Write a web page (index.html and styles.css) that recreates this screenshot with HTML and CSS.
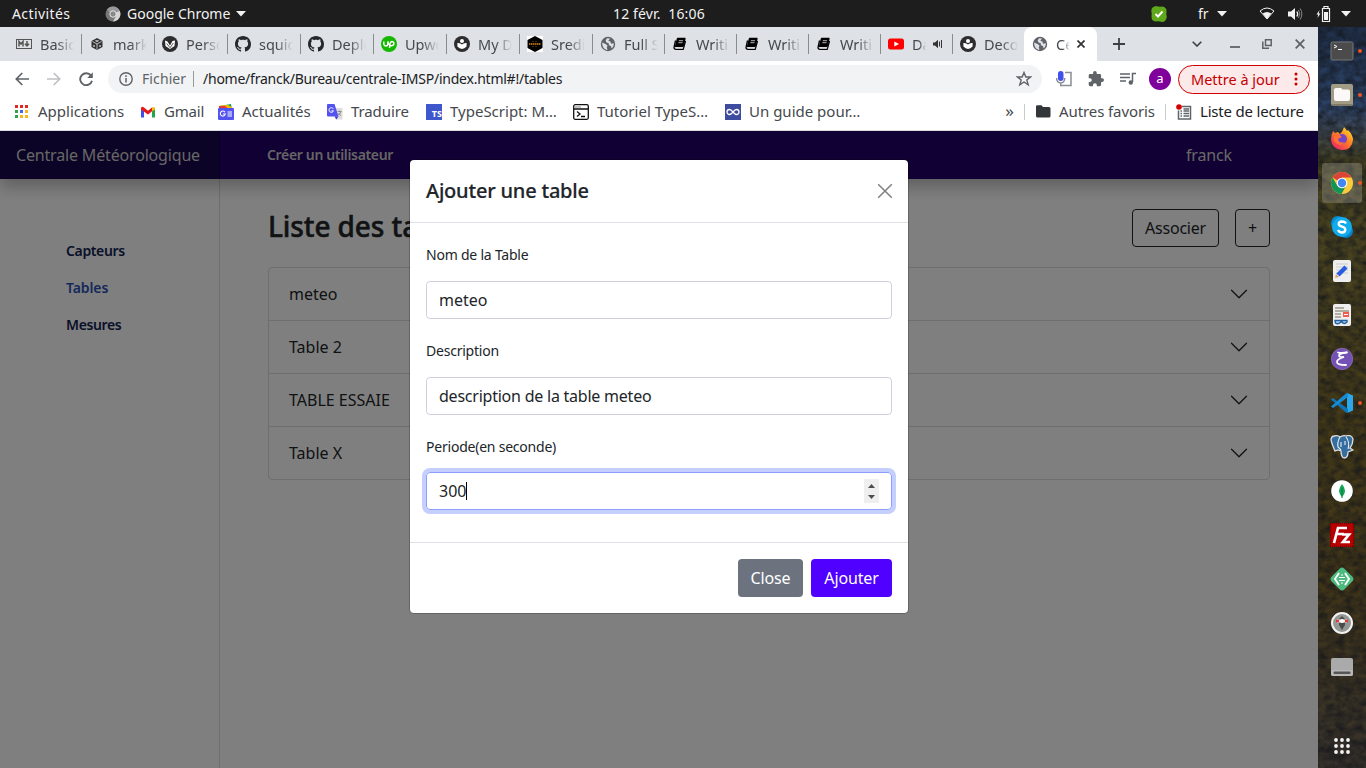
FILE: index.html
```html
<!DOCTYPE html>
<html lang="fr">
<head>
<meta charset="utf-8">
<title>Centrale Météorologique</title>
<link rel="stylesheet" href="styles.css">
</head>
<body>
<svg class="defs" width="0" height="0">
  <symbol id="globe" viewBox="0 0 16 16"><circle cx="8" cy="8" r="7.2" fill="#5f6368"/><path d="M2.2 6.5 6 8.2 7.6 9.8 6.8 11.3 7.5 13.9C4.5 13.7 2 11.2 2.2 6.5ZM7 2.2 10 2.5 8.3 5 10.5 5.5 11 7.8 13.8 7.3C14 9.5 13 11.4 11.5 12.5L11 10.3 8.8 9 8.8 7.2 6.5 6.5 5.6 4.4Z" fill="#dee1e6"/></symbol>
  <symbol id="github" viewBox="0 0 16 16"><path fill="#24292f" d="M8 0C3.58 0 0 3.58 0 8c0 3.54 2.29 6.53 5.47 7.59.4.07.55-.17.55-.38 0-.19-.01-.82-.01-1.49-2.01.37-2.53-.49-2.69-.94-.09-.23-.48-.94-.82-1.13-.28-.15-.68-.52-.01-.53.63-.01 1.08.58 1.23.82.72 1.21 1.87.87 2.33.66.07-.52.28-.87.51-1.07-1.78-.2-3.64-.89-3.64-3.95 0-.87.31-1.59.82-2.15-.08-.2-.36-1.02.08-2.12 0 0 .67-.21 2.2.82.64-.18 1.32-.27 2-.27s1.36.09 2 .27c1.53-1.04 2.2-.82 2.2-.82.44 1.1.16 1.92.08 2.12.51.56.82 1.27.82 2.15 0 3.07-1.87 3.75-3.65 3.95.29.25.54.73.54 1.48 0 1.07-.01 1.93-.01 2.2 0 .21.15.46.55.38A8.01 8.01 0 0 0 16 8c0-4.42-3.58-8-8-8Z"/></symbol>
  <symbol id="book" viewBox="0 0 16 16"><path d="M5.500 2.500H13L11 10.500H3.500Z" stroke="#000" stroke-width="1.300" stroke-linejoin="round"/><path d="M3.500 4.500 2 11.500Q2 13.300 4 13.300H11.200L13.500 5" fill="none" stroke="#000" stroke-width="1.300"/><path d="M3.400 11.800H11.200" stroke="#fff" stroke-width=".8"/><path d="M6.800 4.700H11M6.300 6.700H10.500" stroke="#dee1e6" stroke-width=".8"/></symbol>
  <symbol id="reader" viewBox="0 0 16 16"><circle cx="8" cy="8" r="8" fill="#2d2d2f"/><path d="M3.400 7.100Q6 6.600 8 8.600 10 6.600 12.600 7.100V10.400Q10.400 12.800 8 12.900 5.600 12.800 3.400 10.400Z" fill="#fff"/><circle cx="8" cy="5" r="2" fill="#fff"/></symbol>
  <symbol id="down" viewBox="0 0 10 6"><path d="M0 0H10L5 5.5Z" fill="#f2f2f2"/></symbol>
  <symbol id="chev" viewBox="0 0 16 16"><path fill="#212529" fill-rule="evenodd" d="M1.646 4.646a.5.5 0 0 1 .708 0L8 10.293l5.646-5.647a.5.5 0 0 1 .708.708l-6 6a.5.5 0 0 1-.708 0l-6-6a.5.5 0 0 1 0-.708z"/></symbol>
</svg>

<header class="topbar">
  <span class="tb-act">Activités</span>
  <svg class="tb-chrome" width="16" height="16" viewBox="0 0 16 16"><circle cx="8" cy="8" r="7.5" fill="#777"/><path d="M8 .5A7.5 7.5 0 0 1 14.8 5H8A3.5 3.5 0 0 0 5 6.5L2 3.5A7.5 7.5 0 0 1 8 .5Z" fill="#999"/><path d="M14.8 5A7.5 7.5 0 0 1 8 15.5L11 10 11 6Z" fill="#d5d5d5"/><circle cx="8" cy="8" r="3.2" fill="#888" stroke="#e5e5e5"/></svg>
  <span class="tb-app">Google Chrome</span>
  <svg class="tb-down" width="10" height="6"><use href="#down"/></svg>
  <span class="tb-clock">12 févr.&nbsp; 16:06</span>
  <svg class="tb-check" width="16" height="16" viewBox="0 0 16 16"><path d="M5 0Q8 1 11 .5 16 1 15.500 6 15 8 15.800 11 15 16 11 16 8 15 5 15.500 0 15 .5 10 1 8 .3 5 0 1 5 0Z" fill="#5fa71b"/><path d="M4.500 8 7 10.500 11.500 5.500" fill="none" stroke="#fff" stroke-width="1.900"/></svg>
  <span class="tb-lang">fr</span>
  <svg width="10" height="6"><use href="#down"/></svg>
  <svg class="tb-wifi" width="16" height="13" viewBox="0 0 16 13"><path d="M1 4Q8-2 15 4L8 12Z" fill="none" stroke="#f2f2f2"/><path d="M3.700 6.500Q8 3.500 12.300 6.500L8 12Z" fill="#f2f2f2"/></svg>
  <svg class="tb-vol" width="15" height="14" viewBox="0 0 15 14"><path d="M0 4.500H3L7 1V13L3 9.500H0Z" fill="#f2f2f2"/><path d="M8.800 4.500Q10.500 7 8.800 9.500" fill="none" stroke="#f2f2f2" stroke-width="1.300"/><path d="M10.500 3Q13 7 10.500 11M12.200 1.500Q15.500 7 12.200 12.500" fill="none" stroke="#888"/></svg>
  <svg class="tb-bat" width="15" height="16" viewBox="0 0 15 16"><path d="M3.500 4 .5 8.500H2.200L1.500 12 4.400 7.500H2.700Z" fill="#f2f2f2"/><path d="M8 2V.5H12V2M6.500 2.500H13.500V15.500H6.500Z" fill="none" stroke="#f2f2f2" stroke-width="1.200"/><path d="M8 6H12V14H8Z" fill="#f2f2f2"/></svg>
  <svg class="tb-end" width="10" height="6"><use href="#down"/></svg>
</header>

<div class="desktop">
<main class="browser">
  <nav class="tabs">
    <div class="tab"><svg viewBox="0 0 16 16"><rect x=".5" y="3.500" width="15" height="9" fill="none" stroke="#555"/><path d="M3 10.500V5.500L5 8 7 5.500V10.500M11 5V9.500M9 7.800 11 10 13 7.800" fill="none" stroke="#555" stroke-width="1.500"/></svg><span>Basic</span></div>
    <div class="tab"><svg viewBox="0 0 16 16"><path d="M8 2 13.500 5V11L8 14 2.500 11V5Z" fill="#333"/><path d="M3.500 5.500 8 8 12.500 5.500M8 8V13.500" fill="none" stroke="#dee1e6" stroke-width=".8"/><path d="M5 9V11M11 9V11M6.500 4.500 8 5.300 9.500 4.500" fill="none" stroke="#dee1e6" stroke-width="1.200"/></svg><span>mark</span></div>
    <div class="tab"><svg viewBox="0 0 16 16"><circle cx="8" cy="8" r="8" fill="#2d2d2f"/><path d="M3 4.500 5.500 5.500 8 9.500 10.500 5 13 4.500 12.500 10 8 13 3.500 10Z" fill="#fff"/><path d="M4.800 7.500 7.800 11.500 8.300 11.500 11.300 7" fill="none" stroke="#333" stroke-width=".8"/></svg><span>Perso</span></div>
    <div class="tab"><svg><use href="#github"/></svg><span>squid</span></div>
    <div class="tab"><svg><use href="#github"/></svg><span>Deplo</span></div>
    <div class="tab"><svg viewBox="0 0 16 16"><circle cx="8" cy="8" r="8" fill="#14b800"/><path d="M2.800 5.500V8Q3 10 4.800 10 6.800 10 6.800 8V5.500Q8 9.500 10.700 9.700 12.900 9.500 12.900 7.500 12.800 5.500 10.800 5.500 8.800 5.700 8.500 12" fill="none" stroke="#fff" stroke-width="1.400"/></svg><span>Upwo</span></div>
    <div class="tab"><svg><use href="#reader"/></svg><span>My D</span></div>
    <div class="tab"><svg viewBox="0 0 16 16"><path d="M0 0H16V16H0Z" fill="#fff"/><path d="M8 0 15.500 4V12L8 16 .5 12V4Z"/><path d="M2 8H14" stroke="#a4660d" stroke-width="2" stroke-dasharray="1.500 .5"/><path d="M5 5.500H11M5 10.500H11" stroke="#3e270c" stroke-dasharray="2 1"/></svg><span>Sredi</span></div>
    <div class="tab narrow"><svg><use href="#globe"/></svg><span>Full S</span></div>
    <div class="tab narrow"><svg><use href="#book"/></svg><span>Writi</span></div>
    <div class="tab narrow"><svg><use href="#book"/></svg><span>Writi</span></div>
    <div class="tab narrow"><svg><use href="#book"/></svg><span>Writi</span></div>
    <div class="tab narrow"><svg viewBox="0 0 16 16"><rect y="2.500" width="16" height="11" rx="2.500" fill="#f00"/><path d="M6.300 5.500 11 8 6.300 10.500Z" fill="#fff"/></svg><span class="short">Da</span><svg class="snd" viewBox="0 0 10 10"><path d="M0 3.500H2L5 .8V9.200L2 6.500H0Z" fill="#333"/><path d="M6.500 2.500V7.500M8.500 1V9" stroke="#333"/></svg></div>
    <div class="tab narrow"><svg><use href="#reader"/></svg><span>Deco</span></div>
    <div class="tab active"><svg><use href="#globe"/></svg><span class="short">Ce</span><svg class="cls" viewBox="0 0 8 8"><path d="M.5.5 7.500 7.500M7.500.5.5 7.500" stroke="#333" stroke-width="1.700"/></svg></div>
    <svg class="newtab" width="12" height="12" viewBox="0 0 12 12"><path d="M6 0V12M0 6H12" stroke="#3c4043" stroke-width="1.800"/></svg>
    <div class="winctl">
      <svg width="10" height="6" viewBox="0 0 10 6"><path d="M.7.7 5 5 9.300.7" fill="none" stroke="#3c4043" stroke-width="1.600"/></svg>
      <svg width="10" height="10" viewBox="0 0 10 10"><path d="M0 7H10" stroke="#5f6368" stroke-width="1.800"/></svg>
      <svg width="10" height="10" viewBox="0 0 10 10"><path d="M3.500.8H9.200V6.500H3.500ZM.8 2.500V9.200H7" fill="none" stroke="#5f6368" stroke-width="1.500"/></svg>
      <svg width="10" height="10" viewBox="0 0 10 10"><path d="M.7.7 9.300 9.300M9.300.7.7 9.300" stroke="#5f6368" stroke-width="1.800"/></svg>
    </div>
  </nav>

  <div class="toolbar">
    <svg width="14" height="14" viewBox="0 0 14 14"><path d="M14 7H1.500M7.300 1 1.300 7 7.300 13" fill="none" stroke="#5f6368" stroke-width="1.700"/></svg>
    <svg width="14" height="14" viewBox="0 0 14 14"><path d="M0 7H12.500M6.700 1 12.700 7 6.700 13" fill="none" stroke="#bfc1c4" stroke-width="1.700"/></svg>
    <svg width="14" height="14" viewBox="0 0 14 14"><path d="M12 3.600A6 6 0 1 0 13 8.800" fill="none" stroke="#5f6368" stroke-width="1.900"/><path d="M13.800.3V6H8.200Z" fill="#5f6368"/></svg>
    <div class="omnibox">
      <svg width="14" height="14" viewBox="0 0 14 14"><circle cx="7" cy="7" r="6.200" fill="none" stroke="#5f6368" stroke-width="1.400"/><path d="M7 6V10.500M7 3.300V4.900" stroke="#5f6368" stroke-width="1.500"/></svg>
      <span class="scheme">Fichier</span><i></i><span class="url">/home/franck/Bureau/centrale-IMSP/index.html#!/tables</span>
      <svg class="star" width="16" height="16" viewBox="0 0 16 16"><path d="M8 1.500 9.800 6H14.500L10.800 9 12.200 13.800 8 11 3.800 13.800 5.200 9 1.500 6H6.200Z" fill="none" stroke="#5f6368" stroke-width="1.400"/></svg>
    </div>
    <div class="exts">
      <svg width="16" height="16" viewBox="0 0 16 16"><path d="M9 1.500H15V14.500H4M11 14.500H15" fill="none" stroke="#8b8e92" stroke-width="1.500"/><rect x="2" y="0" width="5.500" height="10" rx="2.700" fill="#4050ea"/><path d="M.5 7Q1 12 4.700 12 8.500 12 8.800 7M4.700 12V15" fill="none" stroke="#858891" stroke-width="1.400"/></svg>
      <svg width="16" height="16" viewBox="1 1 22 22"><path fill="#5f6368" d="M20.500 11H19V7a2 2 0 0 0-2-2h-4V3.500a2.500 2.500 0 0 0-5 0V5H4a2 2 0 0 0-2 2v3.800h1.500a2.700 2.700 0 0 1 0 5.400H2V20a2 2 0 0 0 2 2h3.800v-1.500a2.700 2.700 0 0 1 5.400 0V22H17a2 2 0 0 0 2-2v-4h1.500a2.500 2.500 0 0 0 0-5z"/></svg>
      <svg width="16" height="14" viewBox="0 0 16 14"><path d="M0 2H10M0 5.500H10M0 9H6M12.500 10V1.500H16" fill="none" stroke="#5f6368" stroke-width="1.500"/><circle cx="10.800" cy="10.500" r="2.200" fill="#5f6368"/></svg>
      <b class="avatar">a</b>
    </div>
    <div class="update"><span>Mettre à jour</span><svg width="4" height="14" viewBox="0 0 4 14"><circle cx="2" cy="2" r="1.500"/><circle cx="2" cy="7" r="1.500"/><circle cx="2" cy="12" r="1.500"/></svg></div>
  </div>

  <div class="bookmarks">
    <svg class="apps" width="13" height="13" viewBox="0 0 13 13"><path d="M0 0h3v3h-3zM5 0h3v3h-3zM10 0h3v3h-3z" fill="#e52520"/><path d="M0 5h3v3h-3z" fill="#31a34b"/><path d="M5 5h3v3h-3z" fill="#4464ef"/><path d="M10 5h3v3h-3zM5 10h3v3h-3zM10 10h3v3h-3z" fill="#f4b81c"/><path d="M0 10h3v3h-3z" fill="#31a34b"/></svg><span class="w1">Applications</span>
    <svg class="gm" width="16" height="16" viewBox="0 0 16 16"><path d="M1 3.500V13.500H4V6Z" fill="#4050ef"/><path d="M12 6V13.500H15V3.500Z" fill="#25a64b"/><path d="M1 4Q2 2 4 3.500L8 6.800 12 3.500V7.200L8 10.500 1 5.500Z" fill="#e61919"/><path d="M12 3.500Q14.500 2 15 4.500V5.500L12 7.200Z" fill="#fbbc04"/></svg><span class="w2">Gmail</span>
    <svg class="ac" width="16" height="16" viewBox="0 0 16 16"><path d="M2 2 13 0 14 6H2Z" fill="#169b4b"/><path d="M2 1.500 10 1 15 4V8H2Z" fill="#fbbc04"/><path d="M1 2H7L12 6H1Z" fill="#e33b2e"/><rect y="4" width="16" height="12" rx="1" fill="#5353f2"/><path d="M7 8.300A2.500 2.500 0 1 0 7.300 10H5M9.500 8H14M9.500 10H14M9.500 12H14" fill="none" stroke="#fff" stroke-width="1.100"/></svg><span class="w3">Actualités</span>
    <svg class="tr" width="16" height="16" viewBox="0 0 16 16"><path d="M6 4H15.500V15.500H9Z" fill="#ddd"/><path d="M1 0H7.500L11.500 12.500H1Q0 12.500 0 11.500V1Q0 0 1 0Z" fill="#5353f2"/><path d="M6.300 4.800A2.300 2.300 0 1 0 6.500 6.800H4.500" fill="none" stroke="#fff"/><path d="M10.500 7.500H14.500M12.500 6.500V7.500M14 7.500Q13.500 10 11 11M11.500 9 14 12" fill="none" stroke="#888" stroke-width=".9"/><path d="M7.500 12.500H11.500L9.300 15.500Z" fill="#4639d1"/></svg><span class="w4">Traduire</span>
    <b class="ts">TS</b><span class="w5">TypeScript: M…</span>
    <svg class="tu" width="16" height="16" viewBox="0 0 16 16"><rect x=".7" y=".7" width="14.600" height="14.600" rx="1.500" fill="#fff" stroke="#111" stroke-width="1.300"/><path d="M1 5H15M4 7.500 7 10 4 12.500M8 12.500H12" fill="none" stroke="#111" stroke-width="1.300"/><path d="M2.500 3H8" stroke="#111" stroke-dasharray="1 1"/></svg><span class="w6">Tutoriel TypeS…</span>
    <svg class="co" width="16" height="16" viewBox="0 0 16 16"><path d="M0 0H16V16H0Z" fill="#3d4c9f"/><path d="M8 8Q6 5.500 4.500 5.500A2.500 2.500 0 0 0 4.500 10.500Q6 10.500 8 8 10 5.500 11.500 5.500A2.500 2.500 0 0 1 11.500 10.500Q10 10.500 8 8Z" fill="none" stroke="#fff" stroke-width="1.300"/></svg><span class="w7">Un guide pour…</span>
    <span class="more">»</span><i class="s1"></i>
    <svg class="fo" width="15" height="13" viewBox="0 0 15 13"><path d="M0 1.500Q0 .3 1.500.3H5.500L7 2H13Q14.500 2 14.500 3.500V11Q14.500 12.500 13 12.500H1.500Q0 12.500 0 11Z" fill="#333638"/></svg><span class="w8">Autres favoris</span><i class="s2"></i>
    <svg class="rl" width="16" height="16" viewBox="0 0 16 16"><path d="M6 2.500H14.500V15H2.500V6.500" fill="none" stroke="#5f6368" stroke-width="1.500"/><path d="M4.500 7H6M7.500 7H13M7.500 5H13M4.500 9.500H6M7.500 9.500H13M4.500 12H6M7.500 12H13" stroke="#5f6368" stroke-width="1.300"/><circle cx="3" cy="3" r="2.800" fill="#d60000"/></svg><span class="w9">Liste de lecture</span>
  </div>

  <section class="page">
    <div class="navbar"><div class="brand">Centrale Météorologique</div><b class="create">Créer un utilisateur</b><span class="user">franck</span></div>
    <div class="body">
      <aside class="side"><a>Capteurs</a><a class="on">Tables</a><a>Mesures</a></aside>
      <div class="content">
        <div class="head"><h1>Liste des tables</h1><button class="btn">Associer</button><button class="btn plus">+</button></div>
        <div class="accordion">
          <div><span>meteo</span><svg><use href="#chev"/></svg></div>
          <div><span>Table 2</span><svg><use href="#chev"/></svg></div>
          <div><span>TABLE ESSAIE</span><svg><use href="#chev"/></svg></div>
          <div><span>Table X</span><svg><use href="#chev"/></svg></div>
        </div>
      </div>
    </div>
    <div class="backdrop">
      <div class="modal">
        <div class="m-head"><h2>Ajouter une table</h2><svg width="16" height="16" viewBox="0 0 16 16"><path d="M1.200 1.200 14.800 14.800M14.800 1.200 1.200 14.800" stroke="#7f7f7f" stroke-width="1.500"/></svg></div>
        <div class="m-body">
          <label>Nom de la Table</label><div class="input"><span>meteo</span></div>
          <label>Description</label><div class="input"><span class="desc">description de la table meteo</span></div>
          <label class="last">Periode(en seconde)</label><div class="input focus"><span>300</span><i class="caret"></i><svg class="spin" width="15" height="24" viewBox="0 0 15 24"><path d="M0 0H15V24H0Z" fill="#efefef"/><path d="M4 9 7.500 5 11 9ZM4 16 7.500 20 11 16Z" fill="#4d4d4d"/></svg></div>
        </div>
        <div class="m-foot"><button class="close">Close</button><button class="add">Ajouter</button></div>
      </div>
    </div>
  </section>
</main>

<aside class="dock">
  <svg class="wall" width="48" height="741"><filter id="tex" x="0" y="0" width="100%" height="100%" color-interpolation-filters="sRGB"><feTurbulence type="fractalNoise" baseFrequency=".11 .15" numOctaves="4" seed="8"/><feColorMatrix values="0 0 0 0 .07  0 0 0 0 .08  0 0 0 0 .1  0 1.300 0 0 -.350"/></filter><rect width="48" height="741" filter="url(#tex)"/></svg>
  <div class="app run"><svg viewBox="0 0 24 24"><rect x="1" y="3" width="22" height="18" rx="1.500" fill="#4b4b4b" stroke="#777"/><path d="M4 6 7 7.500 4 9M8 10.500H12" fill="none" stroke="#fff"/></svg></div>
  <div class="app run"><svg viewBox="0 0 24 24"><rect x="1" y="1" width="22" height="22" rx="2" fill="#a39c85"/><rect x="2" y="21" width="20" height="2" fill="#817a67"/><path d="M4 7Q4 5 6 5H11L12.500 6.500H18Q20 6.500 20 8V16Q20 18 18 18H6Q4 18 4 16Z" fill="#faf9f7"/></svg></div>
  <div class="app"><svg viewBox="0 0 24 24"><defs><linearGradient id="fx" x1="1" y1="0" x2=".2" y2="1"><stop stop-color="#fff23e"/><stop offset=".45" stop-color="#ff8a1d"/><stop offset="1" stop-color="#f02268"/></linearGradient></defs><path d="M3 4 5 6 8 5 10 7Q13 4 14 0 16 2 17 4L18 3Q23 8 23 13 22 23 12 23 2 22 1 13 1 8 3 4Z" fill="url(#fx)"/><circle cx="12" cy="12" r="5" fill="#7644c9"/><path d="M4 8Q9 6 12 10L8 12Q9 17 15 15 11 20 6 16 3 13 4 8Z" fill="#ff7133"/></svg></div>
  <div class="app run cur"><svg viewBox="0 0 24 24"><circle cx="12" cy="12" r="11" fill="#fccb3b"/><path d="M12 12 2.500 6.500A11 11 0 0 1 21.500 6.500H12Z" fill="#da4437"/><path d="M2.500 6.500 7.500 15 12 16 16.500 14 11.500 23A11 11 0 0 1 2.500 6.500Z" fill="#149454"/><circle cx="12" cy="12" r="5.300" fill="#fff"/><circle cx="12" cy="12" r="4.200" fill="#4386f5"/></svg></div>
  <div class="app"><svg viewBox="0 0 24 24"><circle cx="8" cy="8" r="7" fill="#078bd4"/><circle cx="16" cy="16" r="7" fill="#087fc9"/><circle cx="12" cy="12" r="10" fill="#11aceb"/><path d="M16 8.500Q15 6.500 12 6.500 8.500 6.700 8.700 9 9 11 12 11.700 15.500 12.500 15.300 15 15 17.500 12 17.500 9 17.300 8 15" fill="none" stroke="#fff" stroke-width="2.300"/></svg></div>
  <div class="app"><svg viewBox="0 0 24 24"><rect x="3" y="1" width="18" height="22" rx="2" fill="#eee"/><path d="M6 5H18M6 8H18M6 11H18M6 14H18" stroke="#ccc"/><path d="M8 16 16 8" stroke="#285de1" stroke-width="4.500"/><path d="M5 19 6 15 9 18Z" fill="#d7a46f"/></svg></div>
  <div class="app"><svg viewBox="0 0 24 24"><rect x="3" y="1" width="18" height="22" rx="2" fill="#eee"/><path d="M5 5H14M5 8H19M5 11H11M5 14H11" stroke="#9e9888" stroke-width="1.300"/><rect x="13" y="9" width="6" height="5" fill="#f15c4f"/><path d="M14 11.500H18" stroke="#fff"/><path d="M5 17.500H11V19Q8 22 5.500 20ZM12 17.500H17V19Q14 22 12 19Z" fill="#a7d0ed" stroke="#265f9e" stroke-width="1.400"/></svg></div>
  <div class="app"><svg viewBox="0 0 24 24"><circle cx="12" cy="12" r="10.700" fill="#7451b5" stroke="#9a77cb" stroke-width=".6"/><path d="M17 5.500Q11 6.500 8 5.500M16.500 5.500Q8.500 6.500 9 9 10 10.500 14 10 7 12 7 15 7 18 16 18" fill="none" stroke="#fff" stroke-width="1.800" stroke-linecap="round"/></svg></div>
  <div class="app run"><svg viewBox="0 0 24 24"><path d="M17 2 23 4.500V19.500L17 22Z" fill="#29a8ed"/><path d="M1 8.500 3 7 18 18V22L16 21.500Z" fill="#0d75b8"/><path d="M1 15.500 3 17 18 6V2L16 2.500Z" fill="#168cd1"/></svg></div>
  <div class="app"><svg viewBox="0 0 24 24"><path d="M4 1Q8 0 10 2 14 0 16 1 21-1 23 4 23 9 20 13L23 15 18 17Q18 23 14 23 11 22 11 16L8 15 5 16Q1 7 1 4 2 1 4 1Z" fill="#346d9f" stroke="#ddd" stroke-width="1.300"/><path d="M10 2Q7 7 8 12L11 15M16 2Q20 7 18 14M11 7 11 12M15 6V10" fill="none" stroke="#eee" stroke-width="1.100"/></svg></div>
  <div class="app"><svg viewBox="0 0 24 24"><circle cx="12" cy="12" r="10.800" fill="#fff"/><path d="M12 5Q18 12 12 18 6 12 12 5Z" fill="#13a757"/><path d="M12 9V19" stroke="#0d7842"/></svg></div>
  <div class="app"><svg viewBox="0 0 24 24"><path d="M0 0H24V24H0Z" fill="#b80000"/><path d="M0 .7H24M0 23.300H24M.7 0V24M23.300 0V24" stroke="#5e0000" stroke-dasharray="1 1"/><path d="M4 20 8 5H17M7 11H14M12 11.500H19L13 19H20" fill="none" stroke="#fff" stroke-width="2.700"/></svg></div>
  <div class="app"><svg viewBox="0 0 24 24"><rect x="3" y="3" width="18" height="18" rx="3.500" transform="rotate(45 12 12)" fill="#4dbb7f"/><path d="M9 6 5 12 9 18M15 6 19 12 15 18" fill="none" stroke="#fff" stroke-width="1.900"/><path d="M9 10.500H15M9 13.500H15M11 8H13M11 16H13" stroke="#fff" stroke-width="1.200"/></svg></div>
  <div class="app"><svg viewBox="0 0 24 24"><circle cx="12" cy="12" r="10" fill="#949894" stroke="#f2f2f2" stroke-width="2"/><path d="M12 5 15 8V14L12 19 9 14V8Z" fill="#4a4c49"/><path d="M7 10H17" stroke="#eee" stroke-width="3"/><path d="M6 10H9M15 10H18" stroke="#e33535" stroke-width="2.500"/><circle cx="12" cy="10" r="2" fill="#fff"/></svg></div>
  <div class="app"><svg viewBox="0 0 24 24"><rect x="1" y="3" width="22" height="18" rx="2" fill="#aaa"/><path d="M1 15H23V19Q23 21 21 21H3Q1 21 1 19Z" fill="#b8b8b8"/><rect x="3.500" y="16.500" width="17" height="2.500" rx="1" fill="#555"/></svg></div>
  <div class="app grid"><svg viewBox="0 0 24 24"><g fill="#f3f3f3"><circle cx="6" cy="6" r="1.900"/><circle cx="12" cy="6" r="1.900"/><circle cx="18" cy="6" r="1.900"/><circle cx="6" cy="12" r="1.900"/><circle cx="12" cy="12" r="1.900"/><circle cx="18" cy="12" r="1.900"/><circle cx="6" cy="18" r="1.900"/><circle cx="12" cy="18" r="1.900"/><circle cx="18" cy="18" r="1.900"/></g></svg></div>
</aside>
</div>
</body>
</html>
```

FILE: styles.css
```css
*{box-sizing:border-box}
body{margin:0;width:1366px;height:768px;overflow:hidden;display:flex;flex-direction:column;font-family:"Noto Sans",sans-serif;font-size:16px;color:#212529}
svg{flex:none;display:block}
span,b,a,label{white-space:nowrap}
button{font-family:inherit}
h1,h2{margin:0}
.defs{position:absolute}

.topbar{height:27px;flex:none;background:#1d1d1d;color:#f2f2f2;font-size:14px;display:flex;align-items:center;padding:0 15px 0 12px;position:relative}
.tb-act{width:93px;letter-spacing:.4px}
.tb-app{margin-left:6px;width:104px}
.tb-down{margin-left:5px}
.tb-clock{position:absolute;left:613px;letter-spacing:.15px}
.tb-check{margin-left:auto}
.tb-lang{margin-left:31px;width:12px;margin-right:7px}
.tb-wifi{margin-left:32px}
.tb-vol{margin-left:13px}
.tb-bat{margin-left:13px}
.tb-end{margin-left:10px}

.desktop{flex:1;min-height:0;display:flex}
.browser{width:1318px;display:flex;flex-direction:column;background:#fff}
.tabs{height:34px;flex:none;background:#dee1e6;display:flex;align-items:center;padding-left:8px}
.tab{width:73px;height:20px;display:flex;align-items:center;padding-left:8px;font-size:14.5px;color:#45494d}
.tab + .tab{border-left:1px solid #888b8f;padding-left:7px}
.tab.narrow{width:72px}
.tab svg{width:16px;height:16px}
.tab span{margin-left:8px;width:34px;-webkit-mask-image:linear-gradient(90deg,#000 50%,transparent);mask-image:linear-gradient(90deg,#000 50%,transparent)}
.tab span.short{width:14px}
.tab svg.snd{width:10px;height:10px;margin-left:7px}
.tab svg.cls{width:8px;height:8px;margin-left:7px}
.tab + .tab.active{height:34px;background:#fff;border:0;border-radius:8px 8px 0 0;padding-left:8px}
.newtab{margin-left:16px}
.winctl{margin-left:auto;display:flex;align-items:center;padding-right:13px;gap:28px}
.winctl svg:nth-child(2){margin:0 -6px 0 0;transform:translateY(1px)}
.winctl svg:nth-child(3){margin-right:-5px}

.toolbar{height:36px;flex:none;display:flex;align-items:center;padding-left:15px;gap:18px}
.omnibox{width:934px;height:28px;margin-left:-3px;border-radius:14px;background:#f1f3f4;display:flex;align-items:center;padding:0 10px 0 11px;font-size:14px}
.scheme{margin-left:9px;color:#5f6368;width:44px;letter-spacing:.1px}
.omnibox i{width:1px;height:16px;background:#999;margin:0 9px 0 7px}
.url{letter-spacing:-.24px;color:#202124}
.scheme,.url{padding-bottom:2px}
.star{margin-left:auto}
.exts{display:flex;align-items:center;gap:16px;margin-left:-4px}
.avatar{width:22px;height:22px;border-radius:50%;background:#80009b;color:#fff;font-size:13px;font-weight:400;line-height:20px;text-align:center;margin-left:-3px}
.update{margin-left:-11px;width:132px;height:29px;border:1px solid #d00000;border-radius:15px;background:#fce9e9;color:#c50000;fill:#c50000;font-size:14.5px;display:flex;align-items:center;justify-content:space-between;padding:0 11px 0 12px}

.bookmarks{height:34px;flex:none;display:flex;align-items:center;padding:0 14px 4px 15px;font-size:15px;color:#45494d;border-bottom:1px solid #d9dbdd}
.bookmarks span{margin-left:10px;padding-bottom:2px}
.bookmarks i{width:1px;height:16px;background:#c9cbcd}
.w1{width:86px}.w2{width:39px;letter-spacing:-.2px}.w3{width:69px}.w4{width:59px;letter-spacing:-.1px}.w5{width:107px}.w6{width:112px}.w7{width:112px}.w8{width:96px;letter-spacing:-.1px}.w9{width:104px}
.gm{margin-left:16px}.ac{margin-left:15px}.tr{margin-left:16px}.tu{margin-left:16px}.co{margin-left:16px}
.bookmarks .w2,.bookmarks .w3,.bookmarks .w4,.bookmarks .w5,.bookmarks .w6,.bookmarks .w7{margin-left:8px}
.ts{width:16px;height:16px;margin-left:16px;background:#3f57cc;color:#fff;font-size:9px;line-height:20px;text-align:right}
.bookmarks .more{margin-left:auto;font-size:17px}
.bookmarks .s1{margin-left:10px}
.fo{margin-left:11px}
.bookmarks .s2{margin-left:10px;margin-right:10px}
.bookmarks .w8{margin-left:8px}
.bookmarks .w9{margin-left:8px;color:#202124;letter-spacing:-.2px}

.page{flex:1;min-height:0;display:flex;flex-direction:column;position:relative;overflow:hidden;background:#fff}
.navbar{height:48px;flex:none;display:flex;align-items:center;background:#220066;color:#d0d0d0;padding-right:86px;box-shadow:0 8px 16px rgba(0,0,0,.25);position:relative}
.brand{width:220px;height:48px;line-height:48px;padding-left:16px;background:#19084d;color:#cecece;border-right:1px solid #14003d;letter-spacing:-.17px}
.create{margin-left:47px;font-size:14px;line-height:20px;font-weight:600;color:#cacaca;letter-spacing:-.34px}
.user{margin-left:auto;letter-spacing:-.15px}
.body{flex:1;display:flex}
.side{width:220px;border-right:1px solid #dcdcdc;padding:53px 0 0 66px}
.side a{display:block;height:37px;line-height:37px;font-size:14px;font-weight:600;color:#132353;letter-spacing:-.37px}
.side .on{color:#2b52b5;letter-spacing:-.1px}
.content{flex:1;padding:30px 48px}
.head{height:38px;display:flex;gap:16px}
h1{font-size:28px;line-height:34px;font-weight:500;margin-right:auto;letter-spacing:-.1px;-webkit-text-stroke:.5px #212529}
.btn{width:87px;height:38px;padding:0;border:1px solid #212529;border-radius:4px;background:none;font-size:16px;color:#212529;white-space:nowrap;letter-spacing:-.2px}
.plus{width:35px}
.accordion{margin-top:20px;border:1px solid #dcdcdc;border-radius:4px}
.accordion div{height:53px;display:flex;align-items:center;justify-content:space-between;padding:0 20px}
.accordion div:first-child{height:52px}
.accordion div + div{border-top:1px solid #dcdcdc}
.accordion svg{width:20px;height:20px}

.backdrop{position:absolute;inset:0;background:rgba(0,0,0,.5);padding:29px 0 0 410px}
.modal{width:498px;height:453px;background:#fff;border-radius:4px;box-shadow:0 0 0 1px rgba(0,0,0,.2);display:flex;flex-direction:column}
.m-head{height:63px;border-bottom:1px solid #dee2e6;display:flex;align-items:center;justify-content:space-between;padding:0 15px 0 16px}
h2{font-size:20px;line-height:26px;font-weight:500;letter-spacing:-.2px;-webkit-text-stroke:.2px #212529}
.m-body{height:319px;padding:16px}
.m-body label{display:block;height:21px;line-height:21px;margin:5px 0 16px;font-size:14px;letter-spacing:-.22px}
.m-body .input + label{margin-top:21px}
.m-body label.last{margin-bottom:15px}
.input{height:38px;border:1px solid #ced0dd;border-radius:4px;display:flex;align-items:center;padding:0 12px}
.desc{letter-spacing:-.23px}
.focus{border-color:#8c9eff;box-shadow:0 0 0 4px #c5cffd}
.caret{width:1px;height:18px;background:#000}
.spin{margin-left:auto}
.m-foot{flex:1;border-top:1px solid #dee2e6;display:flex;justify-content:flex-end;gap:8px;padding:16px}
.m-foot button{height:38px;padding:0;border:0;border-radius:4px;color:#fff;font-size:16px;letter-spacing:-.15px}
.m-foot .close{width:65px;background:#6c737f}
.m-foot .add{width:81px;background:#5000ff}

.dock{width:48px;display:flex;flex-direction:column;align-items:center;position:relative;padding-top:4px;overflow:hidden;background:linear-gradient(180deg,#20304b 0,#2c4266 80px,#3c4a60 95px,#46411f 135px,#4a431f 230px,#453a18 390px,#413518 560px,#3a3326 680px,#35302a)}
.wall{position:absolute;left:0;top:0}
.app{width:40px;height:40px;margin-bottom:4px;flex:none;display:grid;place-items:center;position:relative;border-radius:3px}
.app svg{width:24px;height:24px}
.run::after{content:"";position:absolute;right:0;top:18px;width:4px;height:4px;border-radius:50%;background:#e95420}
.cur{background:rgba(255,255,255,.2)}
.grid{margin-top:auto;margin-bottom:2px}
```
